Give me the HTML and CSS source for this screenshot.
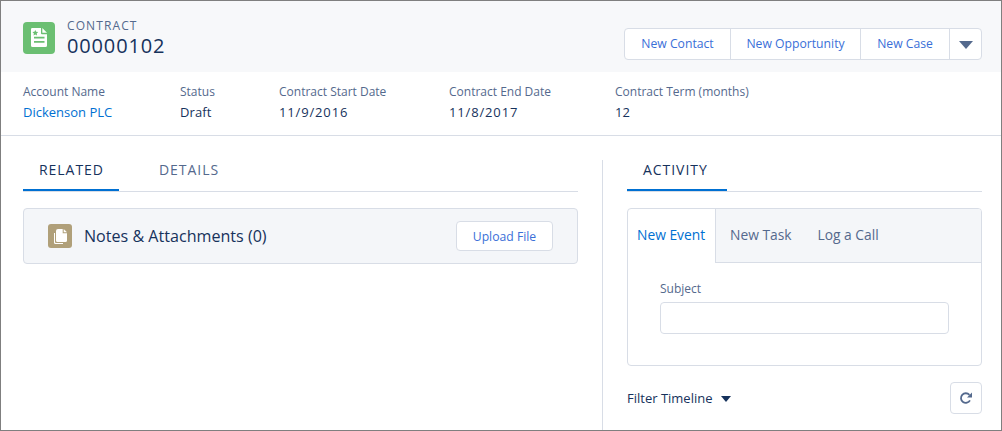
FILE: index.html
```html
<!DOCTYPE html>
<html lang="en">
<head>
<meta charset="utf-8">
<title>Contract 00000102</title>
<link rel="stylesheet" href="styles.css">
</head>
<body>
<div class="frame">
  <header class="page-head">
    <div class="title-group">
      <span class="record-icon">
        <svg width="32" height="32" viewBox="0 0 32 32"><path fill="#fff" d="M9.200 6h8.800v5.200a1 1 0 0 0 1 1h5V23.600a1.500 1.500 0 0 1-1.500 1.500H9.500A1.500 1.500 0 0 1 8 23.600V7.200A1.200 1.200 0 0 1 9.200 6z"/><path fill="#fff" d="M19.300 6 24 10.800h-4.700z"/><path fill="#6bbf72" d="M12.300 7.900l.9 1.800 2 .3-1.500 1.400.4 2-1.800-1-1.800 1 .4-2-1.500-1.400 2-.3zM11 14.800h10.500v1.700H11zM11 19h10.500v1.700H11z"/></svg>
      </span>
      <div class="title-text">
        <div class="entity">CONTRACT</div>
        <div class="record-name">00000102</div>
      </div>
    </div>
    <div class="actions">
      <button class="act act-contact">New Contact</button>
      <button class="act act-opp">New Opportunity</button>
      <button class="act act-case">New Case</button>
      <button class="act act-more" aria-label="More actions"><span class="caret-lg"></span></button>
    </div>
  </header>

  <section class="highlights">
    <div class="field f1"><div class="f-label">Account Name</div><a class="f-link">Dickenson PLC</a></div>
    <div class="field f2"><div class="f-label">Status</div><div class="f-value">Draft</div></div>
    <div class="field f3"><div class="f-label">Contract Start Date</div><div class="f-value f-date">11/9/2016</div></div>
    <div class="field f4"><div class="f-label">Contract End Date</div><div class="f-value f-date">11/8/2017</div></div>
    <div class="field f5"><div class="f-label">Contract Term (months)</div><div class="f-value">12</div></div>
  </section>

  <main class="content">
    <div class="left-col">
      <nav class="tabs">
        <span class="tab tab-active tab-related">RELATED</span>
        <span class="tab tab-details">DETAILS</span>
      </nav>
      <div class="notes-card">
        <span class="notes-icon">
          <svg width="24" height="24" viewBox="0 0 24 24"><path fill="#fff" d="M6 9v9.500A1.500 1.500 0 0 0 7.500 20h7.500v-1H8a1 1 0 0 1-1-1V9z" /><path fill="#fff" d="M10 5h4.700v4.300h4.300v7.200a1.500 1.500 0 0 1-1.500 1.500h-8A1.500 1.500 0 0 1 8 16.500V7a2 2 0 0 1 2-2z"/><path fill="#fff" d="M15.700 5 19 8.300h-3.300z"/></svg>
        </span>
        <span class="notes-title">Notes &amp; Attachments (0)</span>
        <button class="upload">Upload File</button>
      </div>
    </div>
    <div class="right-col">
      <nav class="tabs">
        <span class="tab tab-active tab-activity">ACTIVITY</span>
      </nav>
      <div class="composer">
        <div class="comp-tabs">
          <span class="comp-tab comp-active">New Event</span>
          <div class="comp-rest">
            <span class="comp-tab">New Task</span>
            <span class="comp-tab">Log a Call</span>
          </div>
        </div>
        <div class="comp-body">
          <label class="subject-label" for="subject">Subject</label>
          <input class="subject" id="subject" type="text">
        </div>
      </div>
      <div class="timeline-bar">
        <span class="filter">Filter Timeline <span class="caret-sm"></span></span>
        <button class="refresh" aria-label="Refresh">
          <svg width="14" height="14" viewBox="0 0 14 14"><path fill="none" stroke="#54698d" stroke-width="1.800" d="M11 9.300A4.800 4.800 0 1 1 10.400 3.900"/><path fill="#54698d" d="M13 1.500v5H8z"/></svg>
        </button>
      </div>
    </div>
  </main>
</div>
</body>
</html>
```
FILE: styles.css
```css
* { box-sizing: border-box; }
html, body { margin: 0; padding: 0; background: #fff; }
body { font-family: "Open Sans", "Liberation Sans", sans-serif; color: #16325c; font-size: 13px; }
button { font-family: inherit; margin: 0; cursor: pointer; }
.frame {
  width: 1002px; height: 431px; overflow: hidden;
  border: 1px solid #7f7f7f;
  display: flex; flex-direction: column; background: #fff;
}
.page-head {
  height: 71px; background: #f7f8fa; flex: none;
  display: flex; justify-content: space-between; padding: 21px 19px 0 22px;
}
.title-group { display: flex; gap: 12px; }
.record-icon { width: 32px; height: 32px; background: #6bbf72; border-radius: 4px; display: block; }
.record-icon svg, .notes-icon svg { display: block; }
.title-text { margin-top: -5px; }
.entity { font-size: 12px; line-height: 18px; color: #54698d; letter-spacing: 1.100px; }
.record-name { font-size: 20px; line-height: 21px; color: #16325c; letter-spacing: .85px; }
.actions { display: flex; height: 32px; margin-top: 6px; border: 1px solid #d8dde6; border-radius: 4px; background: #fff; }
.act {
  border: 0; border-left: 1px solid #d8dde6; background: transparent;
  font-size: 12.200px; padding: 0 0 2px; height: 30px; color: #3a6fd8;
}
.act-contact { border-left: 0; width: 105px; }
.act-opp { width: 130px; }
.act-case { width: 89px; }
.act-more { width: 32px; display: flex; align-items: center; justify-content: center; padding: 2px 0 0; }
.caret-lg { width: 0; height: 0; border-left: 7px solid transparent; border-right: 7px solid transparent; border-top: 8px solid #54698d; }
.highlights {
  height: 64px; flex: none; border-bottom: 1px solid #d8dde6;
  display: flex; padding: 11px 0 0 22px;
}
.f1 { width: 157px; } .f2 { width: 99px; } .f3 { width: 170px; } .f4 { width: 166px; } .f5 { width: 200px; }
.f-label { font-size: 12px; line-height: 18px; color: #54698d; }
.f-value, .f-link { display: block; font-size: 13px; line-height: 18px; margin-top: 2px; color: #16325c; letter-spacing: .1px; }
.f-link { color: #0070d2; letter-spacing: 0; }
.f-date { letter-spacing: .85px; }
.content { flex: 1; display: flex; padding: 24px 19px 0 22px; min-height: 0; }
.left-col { width: 555px; margin-right: 24px; }
.right-col { flex: 1; border-left: 1px solid #d8dde6; padding-left: 24px; }
.tabs { display: flex; height: 32px; border-bottom: 1px solid #d8dde6; }
.tab { height: 31px; font-size: 14px; line-height: 20px; padding: 0 16px; color: #54698d; letter-spacing: .95px; }
.tab-active { color: #16325c; border-bottom: 2px solid #0070d2; }
.tab-related { width: 96px; }
.tab-details { margin-left: 24px; }
.tab-activity { width: 100px; }
.notes-card {
  margin-top: 16px; height: 56px; background: #f4f6f9; border: 1px solid #d8dde6; border-radius: 4px;
  display: flex; align-items: center; padding: 0 24px;
}
.notes-icon { width: 24px; height: 24px; background: #b0a07a; border-radius: 3px; display: block; margin-right: 12px; }
.notes-title { font-size: 16.100px; color: #16325c; flex: 1; }
.upload {
  width: 97px; height: 30px; background: #fff; border: 1px solid #d8dde6; border-radius: 4px;
  color: #3a6fd8; font-size: 12.200px; padding: 0;
}
.composer { margin-top: 16px; height: 158px; border: 1px solid #d8dde6; border-radius: 4px; overflow: hidden; }
.comp-tabs { display: flex; height: 54px; }
.comp-tab { font-size: 13.800px; line-height: 52px; color: #54698d; display: block; }
.comp-active { width: 88px; padding-left: 9px; color: #0070d2; border-right: 1px solid #d8dde6; height: 54px; }
.comp-rest { flex: 1; display: flex; gap: 26px; padding-left: 14px; background: #f4f6f9; border-bottom: 1px solid #d8dde6; }
.comp-body { padding: 17px 32px 0; }
.subject-label { display: block; font-size: 12px; line-height: 18px; color: #54698d; }
.subject { display: block; width: 100%; height: 32px; margin-top: 4px; border: 1px solid #d8dde6; border-radius: 4px; background: #fff; }
.timeline-bar { display: flex; justify-content: space-between; margin-top: 16px; }
.filter { font-size: 13px; line-height: 32px; color: #16325c; display: flex; align-items: center; gap: 8px; }
.caret-sm { width: 0; height: 0; border-left: 5px solid transparent; border-right: 5px solid transparent; border-top: 6px solid #16325c; margin-top: 2px; }
.refresh { width: 32px; height: 32px; background: #fff; border: 1px solid #d8dde6; border-radius: 4px; padding: 0; display: flex; align-items: center; justify-content: center; }
```
